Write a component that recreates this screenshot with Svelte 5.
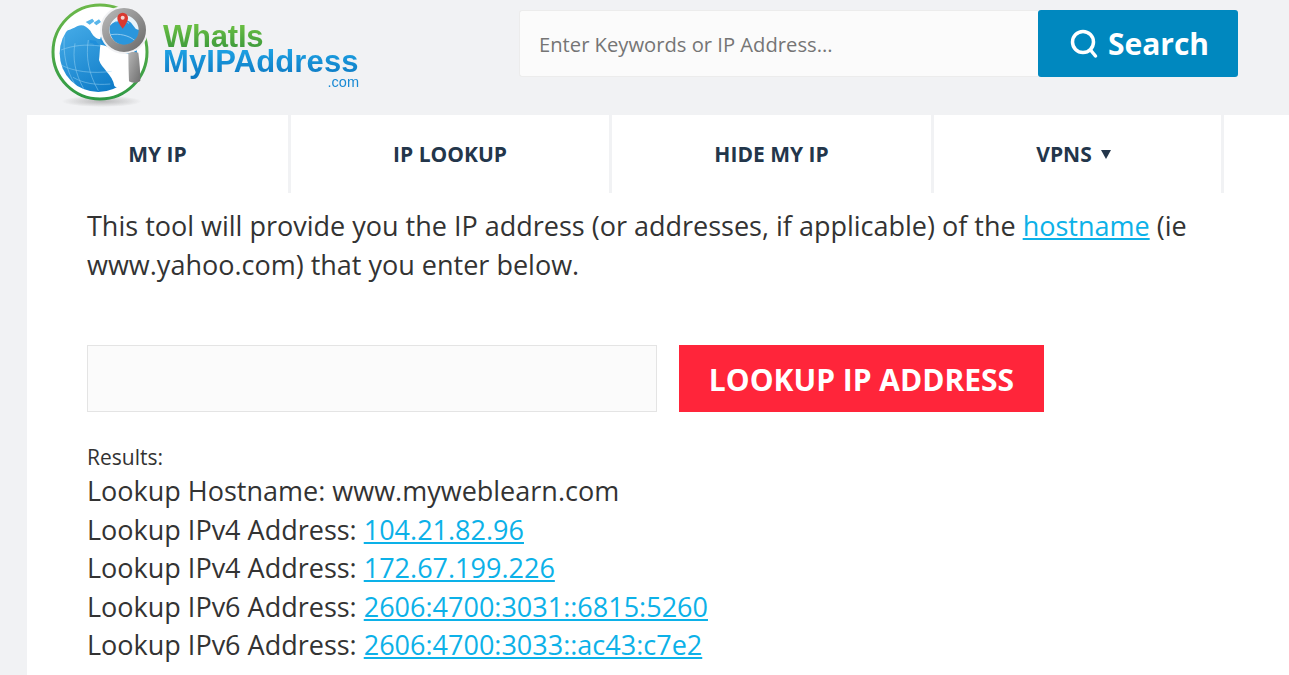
<script>
  const nav = [
    { label: 'MY IP', w: 264 },
    { label: 'IP LOOKUP', w: 321 },
    { label: 'HIDE MY IP', w: 322 },
    { label: 'VPNS', w: 290, caret: true }
  ];
  const rows = [
    ['Lookup IPv4 Address:', '104.21.82.96'],
    ['Lookup IPv4 Address:', '172.67.199.226'],
    ['Lookup IPv6 Address:', '2606:4700:3031::6815:5260'],
    ['Lookup IPv6 Address:', '2606:4700:3033::ac43:c7e2']
  ];
</script>

<div class="page">
  <header class="top">
    <div class="logo">
      <svg class="globe" width="115" height="110" viewBox="0 0 345 330">
        <defs>
          <linearGradient id="sea" x1="0" y1="0" x2="0.6" y2="1">
            <stop offset="0" stop-color="#4db2ec" />
            <stop offset="1" stop-color="#0f7cc8" />
          </linearGradient>
          <linearGradient id="ring" x1="0" y1="0" x2="0" y2="1">
            <stop offset="0" stop-color="#6cb84a" />
            <stop offset="1" stop-color="#2f9a45" />
          </linearGradient>
          <linearGradient id="steel" x1="0" y1="0" x2="1" y2="1">
            <stop offset="0" stop-color="#b5b5b5" />
            <stop offset="1" stop-color="#6f6f6f" />
          </linearGradient>
          <radialGradient id="shade" cx="0.5" cy="0.5" r="0.5">
            <stop offset="0" stop-color="#888" stop-opacity="0.55" />
            <stop offset="1" stop-color="#888" stop-opacity="0" />
          </radialGradient>
        </defs>
        <ellipse cx="170" cy="304" rx="120" ry="17" fill="url(#shade)" />
        <circle cx="165" cy="156" r="141" fill="#fff" stroke="url(#ring)" stroke-width="9" />
        <circle cx="160" cy="160" r="116" fill="url(#sea)" />
        <path d="M62 96C88 54 134 36 182 40c24 4 30 14 20 30-14 4-28 14-36 46-10 4-22-8-30-24-12-14-24-20-38-14-12 6-28 16-56 18z" fill="#fff" />
        <path d="M122 66l20-10 6 8-14 10z M146 68l16-10 6 8-14 10z" fill="#5ab6ea" />
        <path d="M166 134c16 2 28 6 40 16 16 8 36 8 50 14 22 30 8 70-26 92-12 8-16 8-22 2-2-16-12-30-24-44-8-12-18-20-22-34 2-14 2-30 4-46z" fill="#fff" />
        <path d="M134 120l18 2 10 14-12 2-6-8-10-2z M164 118l18 8 12 16-12-4-12-10z" fill="#1f8fdb" />
        <g fill="none" stroke="#a9dbf6" stroke-width="1.600" opacity="0.85">
          <path d="M48 150c36-14 74-18 118-12" />
          <path d="M50 196c36 18 90 26 150 18" />
          <path d="M84 232c32 18 66 24 112 20" />
          <path d="M90 130c-8 44 0 90 26 136" />
          <path d="M130 120c-8 50 0 100 30 152" />
          <path d="M58 110c-4 52 6 100 30 140" />
        </g>
        <circle cx="237" cy="90" r="72" fill="#f1f2f4" />
        <circle cx="237" cy="90" r="50" fill="#e8f4fb" />
        <path d="M194 78c16-16 36-24 58-14 10 6 12 14 20 22 6 4 10 4 14 2-2 26-24 48-50 48-28-2-46-30-42-58z" fill="#2a96dc" />
        <path d="M212 66c12-6 30-4 40 4M198 104c24-4 54 2 72 18" fill="none" stroke="#bfe3f7" stroke-width="2" />
        <circle cx="237" cy="90" r="55" fill="none" stroke="url(#steel)" stroke-width="22" />
        <path d="M233 38a16 16 0 0 1 16 16c0 13-16 32-16 32s-16-19-16-32a16 16 0 0 1 16-16z" fill="#d9392f" />
        <circle cx="233" cy="53" r="6" fill="#f6d5d0" />
        <path d="M250 160c10-5 22-5 30-2 4 30 6 60 6 84-8 8-26 8-34 2-1-28-2-56-2-84z" fill="url(#steel)" />
      </svg>
      <div class="wordmark">
        <div class="what">WhatIs</div>
        <div class="my">MyIPAddress</div>
        <div class="com">.com</div>
      </div>
    </div>
    <form class="search" onsubmit={(e) => e.preventDefault()}>
      <input class="kw" placeholder="Enter Keywords or IP Address..." />
      <button class="go" type="submit">
        <svg width="28" height="30" viewBox="0 0 28 30" fill="none" stroke="#fff" stroke-width="3.500" stroke-linecap="round">
          <circle cx="13" cy="13" r="10.500" />
          <path d="M20.500 21 L25.500 27" />
        </svg>
        Search
      </button>
    </form>
  </header>

  <main class="panel">
    <nav class="nav">
      {#each nav as item}
        <a class="tab" href="#top" style="width:{item.w}px">
          {item.label}
          {#if item.caret}<span class="caret"></span>{/if}
        </a>
      {/each}
      <span class="tab rest"></span>
    </nav>
    <section class="body">
      <p class="intro">This tool will provide you the IP address (or addresses, if applicable) of the <a href="#top">hostname</a> (ie www.yahoo.com) that you enter below.</p>
      <div class="lookup">
        <input class="host" />
        <button class="red" type="button">LOOKUP IP ADDRESS</button>
      </div>
      <div class="results">
        <div class="label">Results:</div>
        <div class="row">Lookup Hostname: www.myweblearn.com</div>
        {#each rows as [k, v]}
          <div class="row">{k} <a href="#top">{v}</a></div>
        {/each}
      </div>
    </section>
  </main>
</div>

<style>
  :global(body) { margin: 0; background: #f1f2f4; overflow: hidden; }
  .page { width: 1289px; height: 675px; overflow: hidden; font-family: "Open Sans", sans-serif; color: #333; }
  .top { height: 115px; display: flex; box-sizing: border-box; padding-left: 45px; }
  .logo { display: flex; width: 474px; height: 110px; }
  .globe { flex: none; filter: blur(0.4px); }
  .wordmark { font-family: "Liberation Sans", sans-serif; font-weight: 700; margin-left: 3px; padding-top: 24px; filter: blur(0.4px); width: 196px; }
  .what, .my { font-size: 31px; line-height: 25px; padding-bottom: 7px; margin-bottom: -7px; -webkit-background-clip: text; background-clip: text; color: transparent; }
  .what { background-image: linear-gradient(#6cc043, #2f8f3a); letter-spacing: -0.2px; }
  .my { background-image: linear-gradient(#1ea2e4, #0a72bd); letter-spacing: 0.15px; position: relative; }
  .com { color: #1a8ad4; font-size: 14.500px; line-height: 12px; font-weight: 400; text-align: right; margin-top: 2px; }
  .search { display: flex; margin-top: 10px; height: 67px; }
  .kw { width: 519px; box-sizing: border-box; height: 67px; border: 1px solid #ececec; border-right: 0; background: #fbfbfb; padding: 1px 19px 0; font: 400 20.200px "Open Sans", sans-serif; color: #333; border-radius: 3px 0 0 3px; outline: none; }
  .kw::placeholder { color: #757575; opacity: 1; }
  .go { width: 200px; height: 67px; border: 0; border-radius: 3px; background: #0088bf; color: #fff; font: 700 30px "Open Sans", sans-serif; display: flex; align-items: center; justify-content: center; gap: 10px; padding: 0 0 0 3px; }
  .panel { margin-left: 27px; background: #fff; height: 560px; }
  .nav { display: flex; height: 78px; }
  .tab { display: flex; align-items: center; justify-content: center; box-sizing: border-box; border-right: 3px solid #f1f2f4; color: #23364b; font-size: 21px; font-weight: 700; text-decoration: none; flex: none; }
  .tab.rest { border: 0; flex: 1; }
  .caret { width: 0; height: 0; border-left: 5px solid transparent; border-right: 5px solid transparent; border-top: 9px solid #23364b; margin: 0 8px 0 9px; }
  .body { padding: 0 0 0 60px; }
  .intro { margin: 13px 0 0; font-size: 27px; line-height: 39px; width: 1130px; }
  a { color: #0cb1e8; }
  .lookup { display: flex; gap: 22px; margin-top: 61px; }
  .host { width: 570px; height: 67px; box-sizing: border-box; border: 1px solid #e4e4e4; background: #fbfbfb; outline: none; }
  .red { width: 365px; height: 67px; border: 0; background: #ff253a; color: #fff; font: 700 30px "Open Sans", sans-serif; padding: 1px 0 0; }
  .results { margin-top: 31px; }
  .label { font-size: 21px; line-height: 29px; }
  .row { font-size: 27px; line-height: 38.500px; }
</style>
